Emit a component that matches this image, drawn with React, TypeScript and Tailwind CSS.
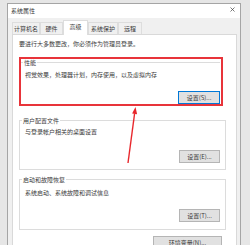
import React from 'react';

const tabs = [
  { name: '计算机名', w: 'w-[28px]', active: false },
  { name: '硬件', w: 'w-[23px]', active: false },
  { name: '高级', w: 'w-[25px]', active: true },
  { name: '系统保护', w: 'w-[30px]', active: false },
  { name: '远程', w: 'w-[24px]', active: false },
];

const Btn = ({ label, focused, className = '' }: { label: string; focused?: boolean; className?: string }) => (
  <div
    className={`h-[13px] flex items-center justify-center bg-[#e1e1e1] border ${
      focused ? 'border-[#0078d7]' : 'border-[#b5b5b5]'
    } ${className}`}
  >
    {label}
  </div>
);

const Legend = ({ text }: { text: string }) => (
  <span className="absolute left-[2px] top-[-4.5px] bg-white px-[1px] leading-[8px]">{text}</span>
);

export default function App() {
  return (
    <div className="relative w-[250px] h-[245px] overflow-hidden bg-[#e6e6e6] pl-[7px] pt-[3px] font-['Noto_Sans_CJK_SC',sans-serif] text-[6px] leading-[8px] text-[#3a3a3a]">
      <div className="w-[234px] h-[270px] border border-[#a5a5a5] bg-[#f0f0f0] flex flex-col">
        {/* Title bar */}
        <div className="h-[14px] shrink-0 bg-white flex items-center justify-between pl-[3px] pr-[5px]">
          <span>系统属性</span>
          <svg width="5" height="5" viewBox="0 0 5 5" className="mb-[3px]">
            <path d="M0.5 0.5 L4.5 4.5 M4.5 0.5 L0.5 4.5" stroke="#444" strokeWidth="0.7" />
          </svg>
        </div>

        {/* Tabs */}
        <div className="h-[16px] shrink-0 flex items-end px-[4px]">
          {tabs.map((t) => (
            <div
              key={t.name}
              className={`${t.w} flex items-center justify-center border-t border-x border-[#dddddd] ${
                t.active ? 'relative z-10 h-[15px] mb-[-1px] bg-white pb-[2px]' : 'h-[12px] bg-[#f0f0f0]'
              }`}
            >
              {t.name}
            </div>
          ))}
        </div>

        {/* Tab panel */}
        <div className="ml-[4px] mr-[3px] flex-1 border border-[#d9d9d9] bg-white pl-[6px] pr-[10px] flex flex-col">
          <p className="mt-[5px]">要进行大多数更改，你必须作为管理员登录。</p>

          {/* Performance (highlighted) */}
          <div className="mt-[9px] w-[204px] h-[49px] border-2 border-[#e8343a] pt-[3px] pr-[1px] flex flex-col">
            <div className="relative border-t border-[#dcdcdc] flex flex-col">
              <Legend text="性能" />
              <p className="mt-[8px] pl-[4px]">视觉效果，处理器计划，内存使用，以及虚拟内存</p>
              <div className="mt-[12px] flex justify-end">
                <Btn label="设置(S)..." focused className="w-[42px]" />
              </div>
            </div>
          </div>

          {/* User profiles */}
          <div className="relative mt-[14px] border border-[#dcdcdc] pr-[5px] pb-[6px] flex flex-col">
            <Legend text="用户配置文件" />
            <p className="mt-[7px] pl-[5px]">与登录帐户相关的桌面设置</p>
            <div className="mt-[14px] flex justify-end">
              <Btn label="设置(E)..." className="w-[41px]" />
            </div>
          </div>

          {/* Startup and recovery */}
          <div className="relative mt-[9px] border border-[#dcdcdc] pr-[5px] pb-[7px] flex flex-col">
            <Legend text="启动和故障恢复" />
            <p className="mt-[9px] pl-[5px]">系统启动、系统故障和调试信息</p>
            <div className="mt-[12px] flex justify-end">
              <Btn label="设置(T)..." className="w-[41px]" />
            </div>
          </div>

          <div className="mt-[6px] flex justify-end pr-[4px]">
            <Btn label="环境变量(N)..." className="w-[69px]" />
          </div>
        </div>
      </div>

      {/* Red annotation arrow */}
      <svg className="absolute left-0 top-0 pointer-events-none" width="250" height="245" viewBox="0 0 250 245">
        <line x1="128" y1="163" x2="134.6" y2="113.5" stroke="#e8262b" strokeWidth="1.4" />
        <polygon points="135.5,107 137.1,114.3 132.1,113.6" fill="#e8262b" />
      </svg>
    </div>
  );
}
